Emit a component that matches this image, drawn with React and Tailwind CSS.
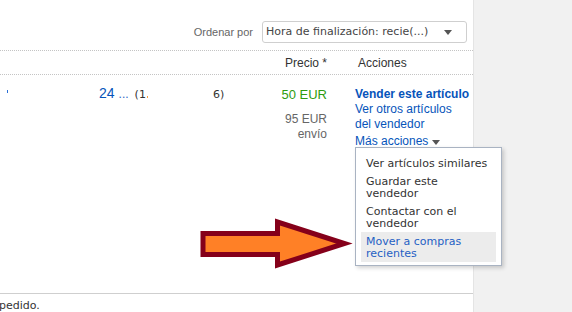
import React from 'react';

const arial = "font-['Liberation_Sans',Arial,sans-serif]";
const verdana = "font-['DejaVu_Sans',Verdana,sans-serif]";

const menuItems = [
  { label: 'Ver artículos similares' },
  { label: 'Guardar este vendedor' },
  { label: 'Contactar con el vendedor' },
  { label: 'Mover a compras recientes', active: true },
];

const App = () => {
  return (
    <div className={`w-full h-[312px] flex overflow-hidden ${arial}`}>
      {/* Main white panel */}
      <div className="w-[473px] h-full bg-white relative flex flex-col">
        {/* Sort bar */}
        <div className="h-[51px] border-b border-dotted border-[#c4c4c4] flex justify-end items-start pt-[21px] pr-[6px]">
          <div className="h-[22px] flex items-center text-[11px] text-[#666] mr-[9px]">Ordenar por</div>
          <div className="w-[205px] h-[22px] border border-[#cfcfcf] rounded-[3px] flex items-center justify-between pl-[3px] pr-[14px]">
            <span className={`${verdana} text-[11px] text-[#444] whitespace-nowrap`}>
              Hora de finalización: recie(...)
            </span>
            <span className="w-0 h-0 border-l-[4.5px] border-r-[4.5px] border-t-[5px] border-l-transparent border-r-transparent border-t-[#555]" />
          </div>
        </div>

        {/* Header row */}
        <div className="h-[24px] border-b border-dotted border-[#c4c4c4] flex items-center pt-[1px] text-[12px] text-[#333]">
          <div className="w-[283px]" />
          <div className="w-[72px] pl-[2px]">Precio *</div>
          <div className="pl-[3px]">Acciones</div>
        </div>

        {/* Item row */}
        <div className="flex pt-[12px] text-[12px]">
          <div className="w-[283px] relative flex items-start -mt-[1px]">
            <span className="w-[1px] h-[3px] bg-[#2a6fd6] mt-[4px] ml-[7px]" />
            <div className="ml-[91px] flex items-baseline whitespace-nowrap leading-[15px]">
              <span className="text-[14px] text-[#0654ba]">24</span>
              <span className="text-[12px] text-[#3365c4] ml-[4px]">...</span>
              <span className={`${verdana} text-[11px] text-[#333] ml-[6px]`}>(1</span>
              <span className="w-[1px] h-[2px] bg-[#f5a040] ml-[1px]" />
              <span className={`${verdana} text-[11px] text-[#333] ml-[65px]`}>6)</span>
            </div>
          </div>

          <div className="w-[72px]">
            <div className="w-[44px] flex flex-col items-end">
              <div className="w-[44px] flex justify-end whitespace-nowrap text-[13px] leading-[15px] text-[#2e9c0e]">
                50 EUR
              </div>
              <div className="mt-[10px] leading-[15px] text-[#666] whitespace-nowrap">95 EUR</div>
              <div className="leading-[15px] text-[#666]">envío</div>
            </div>
          </div>

          <div className="flex flex-col leading-[15px] text-[#0654ba] whitespace-nowrap">
            <span className="font-bold">Vender este artículo</span>
            <span>Ver otros artículos</span>
            <span>del vendedor</span>
            <span className="mt-[2px] flex items-center">
              Más acciones
              <span className="ml-[4px] mt-[2px] w-0 h-0 border-l-[4px] border-r-[4px] border-t-[5px] border-l-transparent border-r-transparent border-t-[#555]" />
            </span>
          </div>
        </div>

        {/* Footer */}
        <div className="mt-auto h-[19px] border-t border-[#cfcfcf] pt-[6px]">
          <div className={`${verdana} text-[11px] leading-[12px] text-[#333] -ml-[1px]`}>pedido.</div>
        </div>

        {/* Dropdown menu */}
        <div className={`absolute left-[355px] top-[147px] w-[147px] bg-white border border-[#a9b3c2] shadow-[2px_2px_4px_rgba(0,0,0,0.18)] pt-[6px] pb-[3px] px-[5px] ${verdana} text-[11px] leading-[12px] z-10`}>
          {menuItems.map((item) => (
            <div
              key={item.label}
              className={`px-[5px] pt-[4px] pb-[2px] ${item.active ? 'bg-[#ececec] text-[#1f5fc4]' : 'text-[#333]'}`}
            >
              {item.label}
            </div>
          ))}
        </div>

        {/* Annotation arrow */}
        <svg
          className="absolute left-[198px] top-[218px]"
          width="160"
          height="54"
          viewBox="198 218 160 54"
        >
          <polygon
            points="203,233.5 277.5,233.5 277.5,222 344.5,243.5 277.5,265 277.5,254.5 203,254.5"
            fill="#ff8026"
            stroke="#85001a"
            strokeWidth="5"
            strokeLinejoin="miter"
          />
        </svg>
      </div>

      {/* Right grey side */}
      <div className="flex-1 h-full bg-[#f1f1f1] border-l border-[#e4e4e4]" />
    </div>
  );
};

export default App;
